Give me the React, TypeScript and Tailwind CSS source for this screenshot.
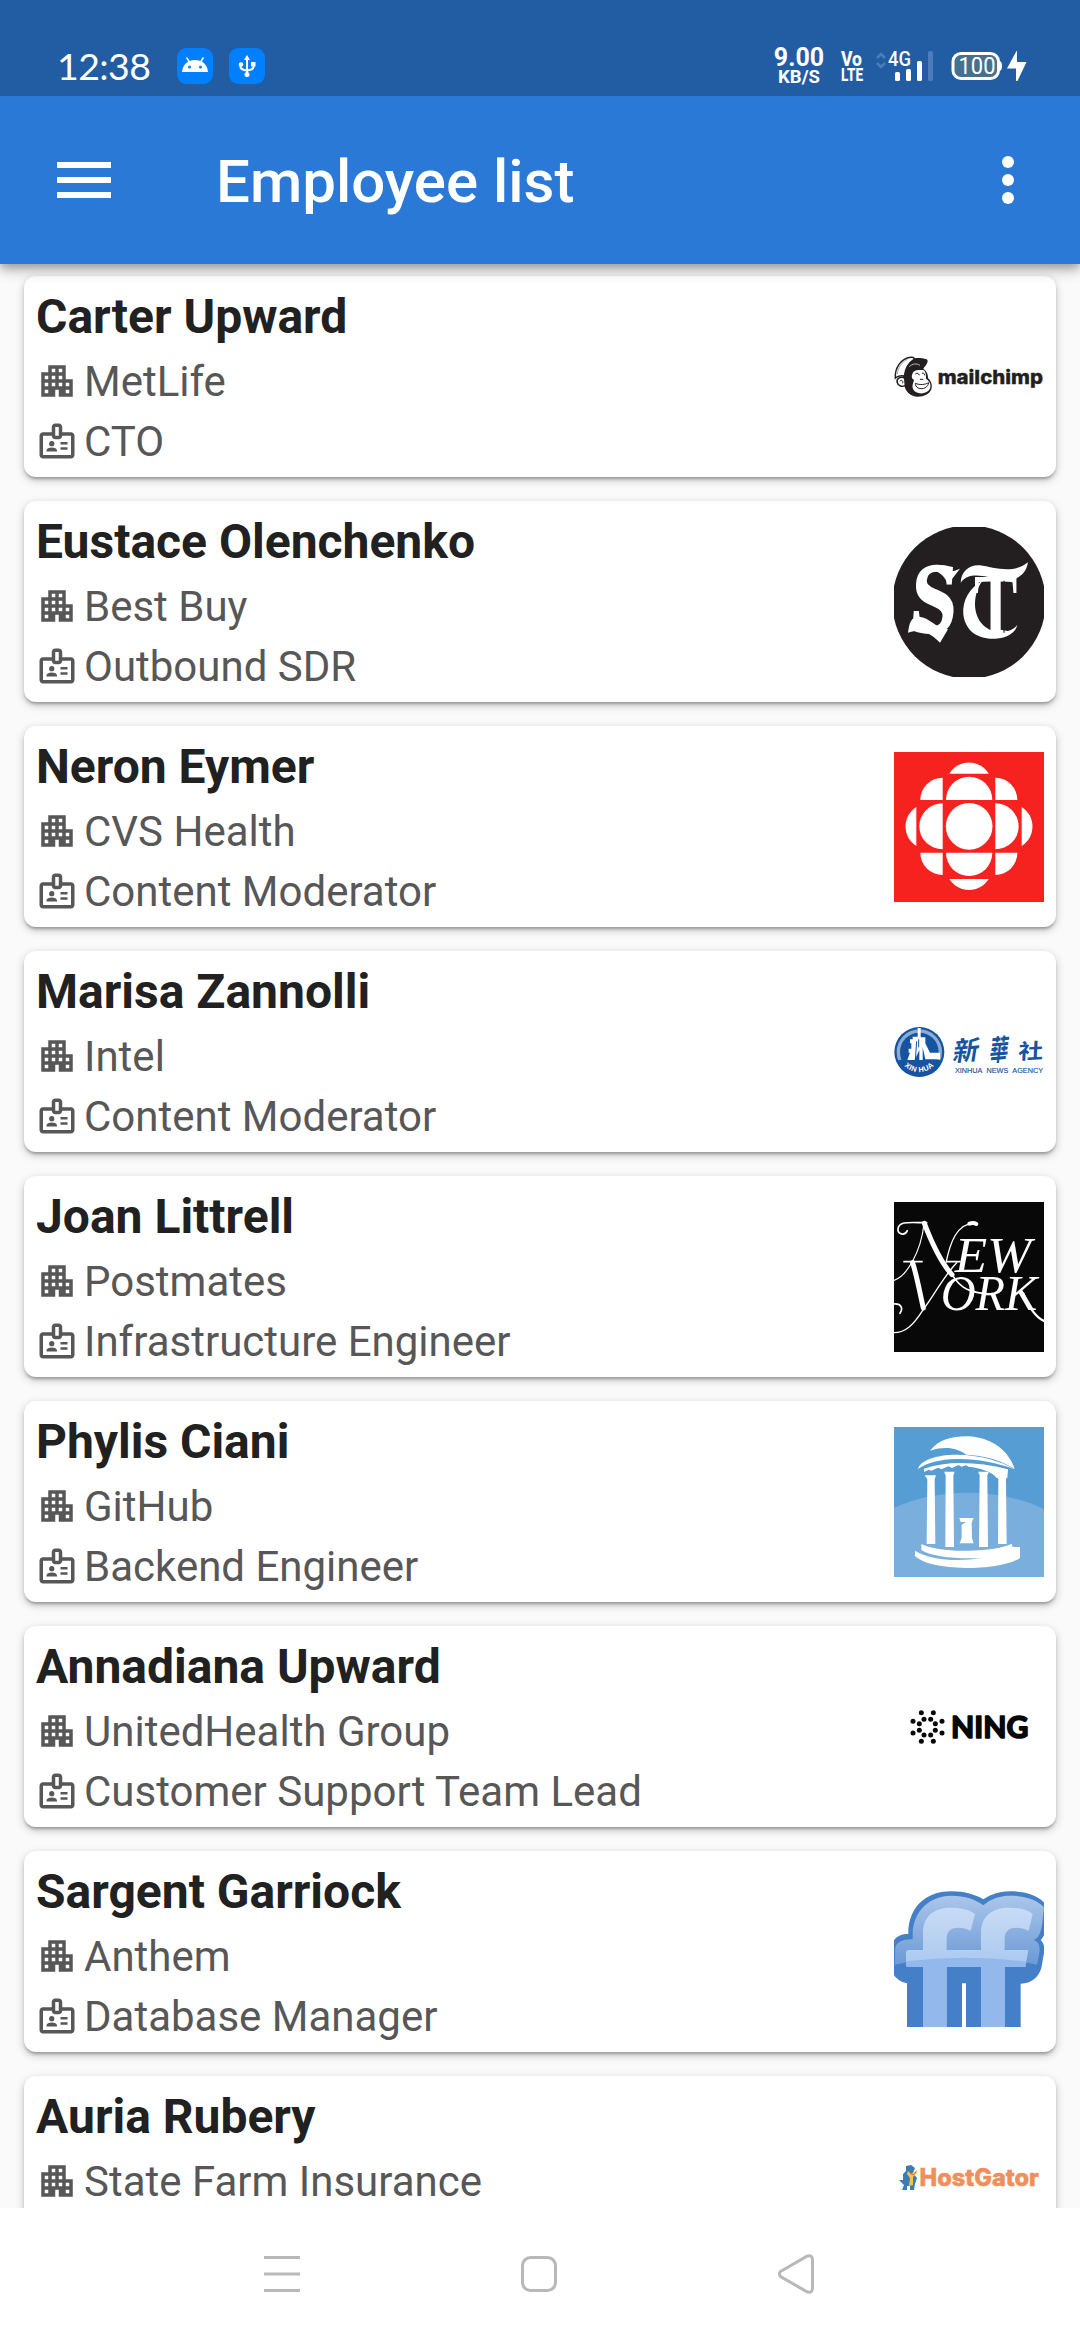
import type { ReactNode } from "react";

const logoClass = "h-[150px] w-[150px] shrink-0";

function MailchimpLogo() {
  return (
    <svg className={logoClass} viewBox="102 -54 450 450">
      <path d="M140 122 C150 112 182 112 200 118 C208 124 198 136 190 146 C204 156 204 168 204 174 C214 184 218 196 214 208 C208 224 190 231 170 230 C150 228 138 214 134 200 L128 160 Z" fill="#231f20" />
      <path d="M106 174 C104 142 124 116 152 112 C160 111 163 114 162 118 C146 128 136 146 133 168 C124 166 112 168 106 174 Z" fill="#fff" stroke="#231f20" strokeWidth="4.5" />
      <path d="M112 162 C114 142 126 126 142 118" fill="none" stroke="#777" strokeWidth="2" />
      <path d="M134 174 C120 168 108 176 112 188 C115 198 126 202 136 196 Z" fill="#fff" stroke="#231f20" strokeWidth="4.5" />
      <path d="M119 184 C124 178 130 182 128 190" fill="none" stroke="#231f20" strokeWidth="3" />
      <path d="M158 160 C162 148 180 150 190 150 C198 154 198 166 198 176 C210 184 215 196 209 208 C200 222 178 224 164 214 C152 202 160 190 162 180 C154 176 154 168 158 160 Z" fill="#fff" />
      <path d="M166 190 C180 196 196 194 206 188 C204 202 190 210 174 204 C168 200 166 196 166 190 Z M166 162 C172 158 176 160 178 166 M186 160 C190 158 194 160 194 166 M180 178 L190 178" fill="none" stroke="#231f20" strokeWidth="3" />
      <path d="M148 140 C158 130 170 130 180 136" fill="none" stroke="#bbb" strokeWidth="3" />
      <text x="233" y="192" textLength="316" lengthAdjust="spacingAndGlyphs" fill="#231f20" stroke="#231f20" strokeWidth="1" fontFamily="Inter" fontWeight="800" fontSize="58">mailchimp</text>
    </svg>
  );
}

function StarLogo() {
  return (
    <svg className={logoClass} viewBox="102 81 450 450">
      <circle cx="327" cy="306" r="230" fill="#231f20" />
      <g fill="#fff" fontFamily="Liberation Serif" fontWeight="700">
        <text transform="translate(146 396) skewX(-4)" fontSize="300" textLength="138" lengthAdjust="spacingAndGlyphs" stroke="#fff" strokeWidth="6">S</text>
        <text x="342" y="402" fontSize="262" textLength="130" lengthAdjust="spacingAndGlyphs">T</text>
      </g>
      <path d="M236 202 C262 222 280 214 300 206 L264 252 C254 232 246 222 228 214 Z" fill="#fff" />
      <path d="M302 248 C304 214 326 194 360 196 C400 202 460 224 504 187 C498 224 470 244 430 240 C380 232 330 210 302 248 Z" fill="#fff" />
      <path d="M368 242 C350 262 342 300 346 326 C352 370 384 396 424 396 C446 394 462 388 472 374 C468 398 440 414 406 416 C362 418 318 400 310 344 C306 300 330 262 368 242 Z" fill="#fff" />
      <path d="M144 398 C148 370 152 350 178 350 C208 352 226 384 264 388 L240 428 C208 394 176 386 144 398 Z" fill="#fff" />
      <path d="M432 242 V398" fill="none" stroke="#231f20" strokeWidth="3.500" />
    </svg>
  );
}

function GemLogo() {
  return (
    <svg className={logoClass} viewBox="102 66 450 450">
      <rect x="102" y="66" width="450" height="450" fill="#f62220" />
      <g fill="#fff">
        <circle cx="327.500" cy="289" r="70" />
        <path d="M258 210 A69.500 70 0 0 1 397 210 Z" />
        <path d="M258 368 A69.500 70 0 0 0 397 368 Z" />
        <path d="M248 220 A70 69 0 0 0 248 358 Z" />
        <path d="M406 220 A70 69 0 0 1 406 358 Z" />
        <path d="M268 131 A69 69 0 0 1 386 131 Z" />
        <path d="M268 447 A69 69 0 0 0 386 447 Z" />
        <path d="M169 231 A69 69 0 0 0 169 348 Z" />
        <path d="M485 231 A69 69 0 0 1 485 348 Z" />
        <path d="M248 143 A67 67 0 0 0 181 210 H248 Z" />
        <path d="M406 143 A66 67 0 0 1 472 210 H406 Z" />
        <path d="M248 435 A67 67 0 0 1 181 368 H248 Z" />
        <path d="M406 435 A66 67 0 0 0 472 368 H406 Z" />
      </g>
    </svg>
  );
}

function XinhuaLogo() {
  return (
    <svg className={logoClass} viewBox="102 -69 450 450">
      <circle cx="178" cy="156" r="75" fill="#15549f" />
      <circle cx="178" cy="156" r="63" fill="none" stroke="#8eabd3" strokeWidth="10" />
      <path d="M110 182 A73 73 0 0 0 246 182 L228 178 L128 178 Z" fill="#15549f" />
      <g fill="#fff">
        <path d="M173 84 H182 V112 H196 V130 L210 158 H240 V178 H196 L188 142 V180 H178 V150 L164 180 H142 L150 158 H146 V146 H154 V130 H150 V118 H158 V110 H173 Z" />
        <path id="xinhua-arc" d="M133 198 A62 62 0 0 0 229 188" fill="none" />
        <text fontFamily="Liberation Sans" fontWeight="700" fontSize="22">
          <textPath href="#xinhua-arc" textLength="98">XIN HUA</textPath>
        </text>
      </g>
      <path d="M170 124 L166 180 M176 118 V142" stroke="#15549f" strokeWidth="3" fill="none" />
      <g fill="#15549f" fontFamily="Noto Sans CJK TC, sans-serif" fontWeight="700" fontSize="78">
        <text transform="translate(276 184) rotate(-5) skewX(-14)">新</text>
        <text transform="translate(386 184) rotate(-5) skewX(-12) scale(.72 1.1)">華</text>
        <text transform="translate(474 178) rotate(-3) skewX(-6) scale(.95 .8)">社</text>
      </g>
      <text x="285" y="218" textLength="264" lengthAdjust="spacingAndGlyphs" fill="#15549f" stroke="#15549f" strokeWidth=".5" fontFamily="Liberation Sans" fontSize="24" wordSpacing="8">XINHUA NEWS AGENCY</text>
    </svg>
  );
}

function NewYorkLogo() {
  return (
    <svg className={logoClass} viewBox="102 66 450 450">
      <rect x="102" y="66" width="450" height="450" fill="#080808" />
      <g fill="#fff" fontFamily="Liberation Serif" fontStyle="italic">
        <text x="284" y="275" fontSize="150" textLength="230" lengthAdjust="spacingAndGlyphs">EW</text>
        <text x="242" y="391" fontSize="150" textLength="290" lengthAdjust="spacingAndGlyphs">ORK</text>
      </g>
      <g fill="none" stroke="#fff" strokeLinecap="round">
        <path d="M142 152 C134 170 112 162 114 146 C118 122 150 128 200 128" strokeWidth="5" />
        <path d="M193 130 C216 190 240 245 276 284" strokeWidth="15" />
        <path d="M276 284 C300 322 326 342 400 342" strokeWidth="5" />
        <path d="M192 132 C182 220 138 290 102 301" strokeWidth="3.500" />
        <path d="M258 248 C270 190 290 128 345 130" strokeWidth="4" />
        <path d="M328 131 C338 128 344 129 349 132" strokeWidth="12" />
        <path d="M132 245 H186 M262 245 H300" strokeWidth="5" />
        <path d="M158 248 C170 286 180 340 190 384" strokeWidth="15" />
        <path d="M290 248 C250 290 220 350 190 388 C160 436 136 458 102 458" strokeWidth="4" />
        <path d="M102 372 C124 370 130 386 120 400" strokeWidth="5" />
        <path d="M490 340 C502 370 524 410 552 423" strokeWidth="7" />
      </g>
    </svg>
  );
}

function TempleLogo() {
  return (
    <svg className={logoClass} viewBox="102 81 450 450">
      <rect x="102" y="81" width="450" height="450" fill="#569dd3" />
      <path d="M102 324 C230 262 420 262 552 328 V531 H102 Z" fill="#7aafdd" />
      <g fill="#fff">
        <path d="M210 152 C236 118 280 108 324 109 C392 112 446 150 464 207 C424 180 370 166 318 164 C292 144 256 138 210 152 Z" />
        <path d="M174 207 C180 182 226 164 290 164 C360 164 424 184 462 207 C410 188 350 176 290 177 C240 178 200 188 174 207 Z" />
        <path d="M192 206 C260 182 350 184 444 208 L442 234 H410 C400 216 360 204 326 200 L318 196 L304 200 L296 195 L276 204 L266 199 L244 208 L234 203 L214 212 L206 209 L192 216 Z" />
        <path d="M194 226 H228 L224 238 L226 432 H200 L202 238 Z" />
        <path d="M252 215 H284 L280 226 L282 441 H256 L257 226 Z" />
        <path d="M354 215 H387 L382 226 L384 441 H357 L359 226 Z" />
        <path d="M410 224 H442 L438 238 L440 432 H414 L415 238 Z" />
        <path d="M298 354 H341 L335 368 L336 414 L341 430 H299 L305 414 V374 L318 366 L302 366 Z" />
        <path d="M184 432 C210 446 270 454 326 452 C382 450 430 444 455 431 L458 441 H480 V474 C446 496 380 504 316 504 C250 502 190 492 165 468 V452 C210 480 290 486 366 474 C290 478 214 470 184 450 Z" />
      </g>
    </svg>
  );
}

const ningDots: [number, number][] = [
  [184, 98], [220, 98], [159, 124], [246, 124], [159, 159], [246, 159], [184, 184], [220, 184],
  [192, 118], [212, 118], [178, 131], [226, 131], [178, 151], [226, 151], [192, 165], [212, 165],
];

function NingLogo() {
  return (
    <svg className={logoClass} viewBox="102 -84 450 450">
      {ningDots.map(([x, y]) => (
        <circle key={`${x}-${y}`} cx={x} cy={y} r="7.500" fill="#080808" />
      ))}
      <text x="273" y="175" textLength="232" lengthAdjust="spacingAndGlyphs" fill="#080808" stroke="#080808" strokeWidth="5" strokeLinejoin="round" fontFamily="Lato" fontWeight="700" fontSize="92">NING</text>
    </svg>
  );
}

function FriendFeedLogo() {
  return (
    <svg className={logoClass} viewBox="102 51 450 450">
      <defs>
        <linearGradient id="ff-glow" x1="0" y1="105" x2="0" y2="315" gradientUnits="userSpaceOnUse">
          <stop offset="0" stopColor="#abc6ea" />
          <stop offset="1" stopColor="#6b9ad6" />
        </linearGradient>
        <linearGradient id="ff-letter" x1="0" y1="140" x2="0" y2="310" gradientUnits="userSpaceOnUse">
          <stop offset="0" stopColor="#c9dcf5" />
          <stop offset="1" stopColor="#abc9f0" />
        </linearGradient>
      </defs>
      <path d="M141 501 V370 C120 366 98 350 96 330 V254 C102 232 120 222 145 222 C144 150 190 94 274 94 C314 94 346 104 370 118 C394 102 420 94 450 94 C490 94 534 104 556 132 L560 190 C556 220 552 230 542 240 C552 250 556 262 550 290 L544 324 C536 352 514 370 482 371 V501 H318 V370 H306 V501 Z" fill="#457fc8" />
      <path d="M105 314 V268 C108 248 122 238 158 238 V220 C160 156 206 107 274 107 C314 107 348 118 370 136 C394 114 424 107 450 107 C490 107 532 118 552 142 L547 190 C542 220 536 234 522 240 C536 246 542 258 537 285 L531 314 C420 288 220 286 105 314 Z" fill="url(#ff-glow)" />
      <g fill="url(#ff-letter)">
        <path d="M189 501 V220 C189 166 224 143 274 143 C306 143 330 150 345 162 L332 212 C300 198 260 198 260 236 V501 Z" />
        <path d="M363 501 V220 C363 166 398 143 448 143 C480 143 504 150 518 162 L506 212 C474 198 434 198 434 236 V501 Z" />
        <path d="M145 270 H505 L496 321 H145 Q138 321 138 314 V277 Q138 270 145 270 Z" />
      </g>
      <path d="M189 501 V321 H145 Q138 321 138 314 V304 Q320 282 499 305 L496 321 H434 V501 H363 V321 H260 V501 Z" fill="#93b8eb" />
    </svg>
  );
}

function HostGatorLogo() {
  return (
    <svg className={logoClass} viewBox="0 0 150 150">
      <path d="M12 64 L17 63 L21 66 L19 71 L23 76 L21 82 L20 88 L16 88 L16 84 L13 84 L13 88 L8 88 L10 83 L5 78 L9 78 L9 72 L12 69 Z" fill="#3d7bb5" />
      <path d="M14 69 L17 72 L23 68 L23 71 L19 75 L19 83 L15 84 L16 76 L13 72 Z" fill="#f3c64a" />
      <path d="M16 71 L19 73 L22 70" stroke="#e66b3b" strokeWidth="1" fill="none" />
      <text x="25.500" y="83.500" textLength="119.500" lengthAdjust="spacingAndGlyphs" fill="#ee8f5c" stroke="#ee8f5c" strokeWidth=".5" fontFamily="Inter" fontWeight="800" fontSize="24">HostGator</text>
    </svg>
  );
}

function BuildingIcon() {
  return (
    <svg className="h-[42px] w-[42px]" viewBox="0 0 24 24" fill="#575757">
      <path d="M17 11V3H7v4H3v14h8v-4h2v4h8V11h-4zM7 19H5v-2h2v2zm0-4H5v-2h2v2zm0-4H5V9h2v2zm4 4H9v-2h2v2zm0-4H9V9h2v2zm0-4H9V5h2v2zm4 8h-2v-2h2v2zm0-4h-2V9h2v2zm0-4h-2V5h2v2zm4 12h-2v-2h2v2zm0-4h-2v-2h2v2z" />
    </svg>
  );
}

function BadgeIcon() {
  return (
    <svg className="h-[42px] w-[42px]" viewBox="0 0 24 24" fill="#575757">
      <path d="M20 7h-5V4c0-1.100-.9-2-2-2h-2c-1.100 0-2 .9-2 2v3H4c-1.100 0-2 .9-2 2v11c0 1.100.9 2 2 2h16c1.100 0 2-.9 2-2V9c0-1.100-.9-2-2-2zM11 4h2v5h-2V4zm9 16H4V9h5c0 1.100.9 2 2 2h2c1.100 0 2-.9 2-2h5v11z" />
      <circle cx="9" cy="13.500" r="1.500" />
      <path d="M11.080 16.180C10.440 15.900 9.740 15.750 9 15.750s-1.440.15-2.080.43C6.360 16.420 6 16.960 6 17.570V18h6v-.43c0-.61-.36-1.150-.92-1.390zM14 15.500h4V17h-4zM14 12.500h4V14h-4z" />
    </svg>
  );
}

interface Employee {
  name: string;
  company: string;
  role: string;
  logo: ReactNode;
}

const employees: Employee[] = [
  { name: "Carter Upward", company: "MetLife", role: "CTO", logo: <MailchimpLogo /> },
  { name: "Eustace Olenchenko", company: "Best Buy", role: "Outbound SDR", logo: <StarLogo /> },
  { name: "Neron Eymer", company: "CVS Health", role: "Content Moderator", logo: <GemLogo /> },
  { name: "Marisa Zannolli", company: "Intel", role: "Content Moderator", logo: <XinhuaLogo /> },
  { name: "Joan Littrell", company: "Postmates", role: "Infrastructure Engineer", logo: <NewYorkLogo /> },
  { name: "Phylis Ciani", company: "GitHub", role: "Backend Engineer", logo: <TempleLogo /> },
  { name: "Annadiana Upward", company: "UnitedHealth Group", role: "Customer Support Team Lead", logo: <NingLogo /> },
  { name: "Sargent Garriock", company: "Anthem", role: "Database Manager", logo: <FriendFeedLogo /> },
  { name: "Auria Rubery", company: "State Farm Insurance", role: "", logo: <HostGatorLogo /> },
];

function EmployeeCard({ name, company, role, logo }: Employee) {
  return (
    <li className="flex h-[201px] shrink-0 items-center justify-between rounded-xl bg-white px-3 shadow-[0_3px_3px_-1px_rgba(0,0,0,0.26),0_3px_9px_rgba(0,0,0,0.24)]">
      <div className="h-full pt-[13px]">
        <h2 className="h-[62px] text-[48px] leading-[56px] font-bold text-[#212121]">{name}</h2>
        <p className="flex h-[60px] items-center gap-1.5 text-[42px] leading-[49px] text-[#575757]">
          <BuildingIcon />
          {company}
        </p>
        <p className="flex h-[60px] items-center gap-1.5 text-[42px] leading-[49px] text-[#575757]">
          <BadgeIcon />
          {role}
        </p>
      </div>
      {logo}
    </li>
  );
}

function StatusBar() {
  return (
    <div className="flex h-24 items-start bg-[#225ca2] pt-12 pr-[52px] pl-[57px] text-white">
      <span className="h-9 w-[120px] font-[Lato] text-[37.5px] leading-[36px] tracking-[-0.6px]">12:38</span>
      <svg className="h-9 w-9" viewBox="0 0 36 36">
        <rect width="36" height="36" rx="9" fill="#007fff" />
        <path d="M5 24 C5.500 17 10 12 18 12 C26 12 30.500 17 31 24 Z" fill="#fff" />
        <path d="M9.500 9.500 L12.500 14 M26.500 9.500 L23.500 14" stroke="#fff" strokeWidth="1.500" />
        <circle cx="12.500" cy="19" r="1.500" fill="#007fff" />
        <circle cx="23.500" cy="19" r="1.500" fill="#007fff" />
      </svg>
      <svg className="ml-4 h-9 w-9" viewBox="0 0 36 36">
        <rect width="36" height="36" rx="9" fill="#007fff" />
        <path d="M18 10 V27 M11.500 17 V19 Q12 22 18 22.500 Q24 22 24.500 19 V16" fill="none" stroke="#fff" strokeWidth="2" />
        <path d="M18 7 L21 12 H15 Z" fill="#fff" />
        <circle cx="12" cy="16.500" r="2.200" fill="#fff" />
        <rect x="22" y="14" width="4.500" height="4.500" fill="#fff" />
        <circle cx="18" cy="26.500" r="2.500" fill="#fff" />
      </svg>
      <div className="ml-auto flex w-[50px] flex-col items-center font-[Roboto] font-bold">
        <span className="text-[25px] leading-[19px]">9.00</span>
        <span className="text-[18.5px] leading-[21px]">KB/S</span>
      </div>
      <svg className="ml-4 h-9 w-6" viewBox="0 0 24 36" fill="#fff" fontFamily="Roboto" fontWeight="800">
        <text x="1" y="18" fontSize="20" textLength="21" lengthAdjust="spacingAndGlyphs">Vo</text>
        <text x="1" y="33" fontSize="19" textLength="22" lengthAdjust="spacingAndGlyphs">LTE</text>
      </svg>
      <svg className="ml-3 h-9 w-[58px]" viewBox="0 0 58 36" fill="#fff">
        <path d="M1 10 L5 6 L9 10 M1 15 L5 19 L9 15" fill="none" stroke="#4c7cba" strokeWidth="2.500" />
        <text x="12" y="18" fontSize="21" textLength="23" lengthAdjust="spacingAndGlyphs" fontFamily="Roboto" fontWeight="500">4G</text>
        <rect x="19" y="24" width="5" height="9" rx="1.500" />
        <rect x="30" y="21" width="5" height="12" rx="1.500" />
        <rect x="41" y="13" width="5" height="20" rx="1.500" />
        <rect x="52" y="3" width="5" height="30" rx="1.500" fill="#4c7cba" />
      </svg>
      <svg className="ml-[17px] h-9 w-[77px]" viewBox="0 0 77 36" fill="#fff">
        <rect x="2" y="5.500" width="45.500" height="25" rx="8" fill="#47708f" stroke="#fff" strokeWidth="3" />
        <path d="M48 13 Q51 13 51 18 Q51 23 48 23 Z" />
        <text x="7.500" y="26" fontSize="23" textLength="37" lengthAdjust="spacingAndGlyphs" fontFamily="Roboto" fontWeight="400">100</text>
        <path d="M65.500 3 L56 20.500 H65 V33 H66.500 L75.500 14 H66 V3 Z" />
      </svg>
    </div>
  );
}

export default function App() {
  return (
    <div className="flex h-[2340px] w-[1080px] flex-col overflow-hidden bg-[#fafafa] font-[Roboto,sans-serif]">
      <header className="relative z-10 h-[264px] shrink-0 shadow-[0_6px_12px_rgba(0,0,0,0.3),0_3px_6px_rgba(0,0,0,0.12)]">
        <StatusBar />
        <div className="flex h-[168px] items-center bg-[#2b79d7] pr-[66px] pl-[57px] text-white">
          <svg className="h-9 w-[54px]" viewBox="0 0 54 36" fill="#fff">
            <path d="M0 0H54V6H0ZM0 15H54V21H0ZM0 30H54V36H0Z" />
          </svg>
          <h1 className="ml-[105px] pt-1 text-[60px] leading-[70px] font-medium">Employee list</h1>
          <svg className="ml-auto h-12 w-3" viewBox="0 0 12 48" fill="#fff">
            <circle cx="6" cy="6" r="6" />
            <circle cx="6" cy="24" r="6" />
            <circle cx="6" cy="42" r="6" />
          </svg>
        </div>
      </header>
      <ul className="flex min-h-0 flex-1 flex-col gap-6 overflow-hidden px-6 pt-3">
        {employees.map((employee) => (
          <EmployeeCard key={employee.name} {...employee} />
        ))}
      </ul>
      <nav className="relative flex h-[132px] shrink-0 items-center justify-between bg-white pr-[265px] pl-[263px]">
        <svg className="h-10 w-[38px]" viewBox="0 0 38 40" stroke="#b8b8b8" strokeWidth="3">
          <path d="M1 3.500H37M1 20H37M1 36.500H37" />
        </svg>
        <svg className="h-10 w-10" viewBox="0 0 40 40" fill="none" stroke="#b8b8b8" strokeWidth="3">
          <rect x="3.500" y="3.500" width="33" height="33" rx="8" />
        </svg>
        <svg className="h-10 w-[38px]" viewBox="0 0 38 40" fill="none" stroke="#b8b8b8" strokeWidth="3">
          <path d="M3.500 17.500 L30 2.200 Q35.500 0.500 35.500 6 V34 Q35.500 39.500 30 37.800 L3.500 22.500 Q1.500 20 3.500 17.500 Z" />
        </svg>
      </nav>
    </div>
  );
}
